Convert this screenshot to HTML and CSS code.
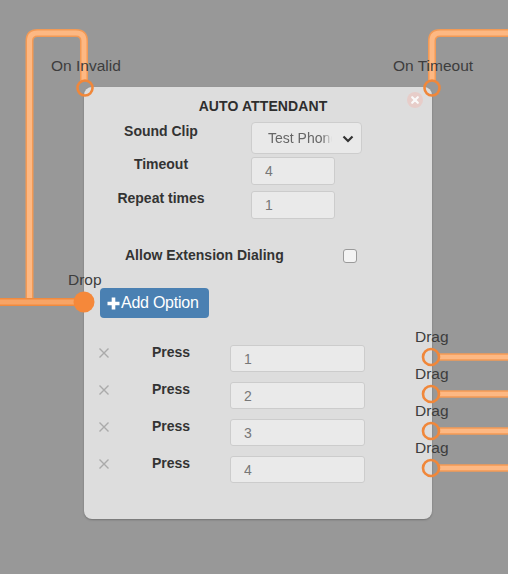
FILE: index.html
```html
<!DOCTYPE html>
<html>
<head>
<meta charset="utf-8">
<link rel="stylesheet" href="styles.css">
</head>
<body>
<div class="canvas">
  <div class="node">
    <span class="close"><svg width="16" height="16" viewBox="0 0 16 16"><circle cx="8" cy="8" r="8" fill="#e9cbc6"/><path d="M5.2 5.2 L10.8 10.8 M10.8 5.2 L5.2 10.8" stroke="#fff" stroke-width="2.2" stroke-linecap="round"/></svg></span>
    <div class="title">AUTO ATTENDANT</div>
    <div class="fields">
      <div class="frow r1">
        <div class="flabel">Sound Clip</div>
        <div class="select"><span class="sel-text">Test Phone</span><svg class="chev" width="12" height="8" viewBox="0 0 12 8"><path d="M1.5 1.5 L6 6 L10.5 1.5" fill="none" stroke="#333" stroke-width="2.2"/></svg></div>
      </div>
      <div class="frow r2">
        <div class="flabel">Timeout</div>
        <input class="field short" type="text" value="4">
      </div>
      <div class="frow r3">
        <div class="flabel">Repeat times</div>
        <input class="field short" type="text" value="1">
      </div>
    </div>
    <div class="check-row">
      <span class="clabel">Allow Extension Dialing</span>
      <span class="checkbox"></span>
    </div>
    <button class="add-btn"><svg class="plus" width="13" height="13" viewBox="0 0 13 13"><path d="M6.5 0.5 V12.5 M0.5 6.5 H12.5" stroke="#fff" stroke-width="3.6"/></svg>Add Option</button>
    <div class="options">
      <div class="opt"><svg class="x" width="10" height="10" viewBox="0 0 10 10"><path d="M0.5 0.5 L9.5 9.5 M9.5 0.5 L0.5 9.5" stroke="#aaa" stroke-width="1.4"/></svg><span class="press">Press</span><input class="field wide" type="text" value="1"></div>
      <div class="opt"><svg class="x" width="10" height="10" viewBox="0 0 10 10"><path d="M0.5 0.5 L9.5 9.5 M9.5 0.5 L0.5 9.5" stroke="#aaa" stroke-width="1.4"/></svg><span class="press">Press</span><input class="field wide" type="text" value="2"></div>
      <div class="opt"><svg class="x" width="10" height="10" viewBox="0 0 10 10"><path d="M0.5 0.5 L9.5 9.5 M9.5 0.5 L0.5 9.5" stroke="#aaa" stroke-width="1.4"/></svg><span class="press">Press</span><input class="field wide" type="text" value="3"></div>
      <div class="opt"><svg class="x" width="10" height="10" viewBox="0 0 10 10"><path d="M0.5 0.5 L9.5 9.5 M9.5 0.5 L0.5 9.5" stroke="#aaa" stroke-width="1.4"/></svg><span class="press">Press</span><input class="field wide" type="text" value="4"></div>
    </div>
  </div>

  <svg class="wires" width="508" height="574" viewBox="0 0 508 574">
    <g fill="none" stroke-linejoin="round">
      <path d="M29.5 299 V41 Q29.5 33 37.5 33 H76 Q84 33 84 41 V81" stroke="#f39a55" stroke-width="8"/>
      <path d="M29.5 299 V41 Q29.5 33 37.5 33 H76 Q84 33 84 41 V81" stroke="#fdb883" stroke-width="5"/>
      <path d="M432 81 V41 Q432 33 440 33 H508" stroke="#f39a55" stroke-width="8"/>
      <path d="M432 81 V41 Q432 33 440 33 H508" stroke="#fdb883" stroke-width="5"/>
      <path d="M0 302 H80" stroke="#f08a3e" stroke-width="8"/>
      <path d="M0 302 H80" stroke="#f7a466" stroke-width="5"/>
      <path d="M439 357 H508 M439 394 H508 M439 431 H508 M439 468 H508" stroke="#f39a55" stroke-width="7.5"/>
      <path d="M439 357 H508 M439 394 H508 M439 431 H508 M439 468 H508" stroke="#fdb883" stroke-width="4.5"/>
      <circle cx="85" cy="88" r="7.5" stroke="#f0873a" stroke-width="2.6"/>
      <circle cx="432" cy="88" r="7.5" stroke="#f0873a" stroke-width="2.6"/>
      <circle cx="431" cy="357" r="8" stroke="#f0873a" stroke-width="2.6"/>
      <circle cx="431" cy="394" r="8" stroke="#f0873a" stroke-width="2.6"/>
      <circle cx="431" cy="431" r="8" stroke="#f0873a" stroke-width="2.6"/>
      <circle cx="431" cy="468" r="8" stroke="#f0873a" stroke-width="2.6"/>
    </g>
    <circle cx="84" cy="302" r="10.5" fill="#f5883a"/>
  </svg>

  <span class="wlabel lbl-invalid">On Invalid</span>
  <span class="wlabel lbl-timeout">On Timeout</span>
  <span class="wlabel lbl-drop">Drop</span>
  <span class="wlabel lbl-drag1">Drag</span>
  <span class="wlabel lbl-drag2">Drag</span>
  <span class="wlabel lbl-drag3">Drag</span>
  <span class="wlabel lbl-drag4">Drag</span>
</div>
</body>
</html>
```
FILE: styles.css
```css
html, body {
  margin: 0;
  padding: 0;
  background: #989898;
}
body {
  font-family: "Liberation Sans", Arial, sans-serif;
}
.canvas {
  position: relative;
  width: 508px;
  height: 574px;
  overflow: hidden;
  background: #989898;
}
.node {
  position: absolute;
  left: 84px;
  top: 87px;
  width: 348px;
  height: 432px;
  box-sizing: border-box;
  background: #dddddd;
  border-radius: 8px;
  box-shadow: 0 1px 2px rgba(0,0,0,0.25);
  color: #333;
}
.close {
  position: absolute;
  left: 323px;
  top: 5px;
  width: 16px;
  height: 16px;
  opacity: 0.85;
}
.close svg { display: block; }
.title {
  margin-top: 11px;
  padding-left: 10px;
  font-weight: bold;
  font-size: 14px;
  line-height: 16px;
  text-align: center;
  letter-spacing: 0.1px;
  color: #2e2e2e;
}
.fields {
  margin-top: 8px;
  padding-left: 14px;
}
.frow {
  display: grid;
  grid-template-columns: 126px auto;
  column-gap: 27px;
  align-items: start;
  justify-items: start;
}
.r1 { margin-bottom: 3px; }
.r2 { margin-bottom: 6px; }
.flabel {
  justify-self: center;
  font-weight: bold;
  font-size: 14px;
  line-height: 16px;
  margin-top: -1px;
  color: #333;
}
.r1 .flabel { margin-top: 1px; }
.select {
  position: relative;
  width: 111px;
  height: 32px;
  box-sizing: border-box;
  border: 1px solid #cdcdcd;
  border-radius: 4px;
  background: #e9e9e9;
  display: flex;
  align-items: center;
  padding-left: 16px;
}
.sel-text {
  display: block;
  width: 64px;
  overflow: hidden;
  white-space: nowrap;
  font-size: 14px;
  color: #666;
  -webkit-mask-image: linear-gradient(to right, #000 85%, transparent 100%);
  mask-image: linear-gradient(to right, #000 85%, transparent 100%);
}
.chev {
  position: absolute;
  right: 7px;
  top: 12px;
}
.field {
  box-sizing: border-box;
  height: 28px;
  border: 1px solid #cccccc;
  border-radius: 3px;
  background: #eaeaea;
  font-family: "Liberation Sans", Arial, sans-serif;
  font-size: 14px;
  color: #777;
  padding: 0 0 0 13px;
  margin: 0;
  outline: none;
}
.short { width: 84px; }
.wide { width: 135px; height: 27px; }
.check-row {
  display: flex;
  align-items: center;
  padding-left: 41px;
  margin-top: 28px;
  height: 16px;
}
.clabel {
  font-weight: bold;
  font-size: 14px;
  line-height: 16px;
  color: #333;
}
.checkbox {
  display: block;
  box-sizing: border-box;
  width: 14px;
  height: 14px;
  margin-left: 59px;
  margin-top: 2px;
  border: 1px solid #9a9a9a;
  border-radius: 3px;
  background: #f3f3f3;
}
.add-btn {
  display: flex;
  align-items: center;
  box-sizing: border-box;
  margin: 25px 0 0 16px;
  width: 109px;
  height: 30px;
  padding: 0 0 0 7px;
  border: none;
  border-radius: 4px;
  background: #4a80b2;
  color: #fff;
  font-family: "Liberation Sans", Arial, sans-serif;
  font-size: 16px;
  letter-spacing: -0.25px;
}
.plus {
  margin-right: 1px;
  flex: none;
}
.options {
  margin-top: 27px;
  display: flex;
  flex-direction: column;
  gap: 10px;
}
.opt {
  display: grid;
  grid-template-columns: 53px 78px 135px;
  padding-left: 15px;
  align-items: start;
}
.x {
  margin-top: 3px;
}
.press {
  font-weight: bold;
  font-size: 14px;
  line-height: 16px;
  margin-top: -1px;
  color: #333;
}
.wires {
  position: absolute;
  left: 0;
  top: 0;
  pointer-events: none;
}
.wlabel {
  position: absolute;
  font-size: 15.5px;
  line-height: 18px;
  color: #3d3d3d;
  white-space: nowrap;
}
.lbl-invalid { left: 51px; top: 57px; }
.lbl-timeout { left: 393px; top: 57px; }
.lbl-drop { left: 68px; top: 271px; }
.lbl-drag1 { left: 415px; top: 328px; }
.lbl-drag2 { left: 415px; top: 365px; }
.lbl-drag3 { left: 415px; top: 402px; }
.lbl-drag4 { left: 415px; top: 439px; }
```
